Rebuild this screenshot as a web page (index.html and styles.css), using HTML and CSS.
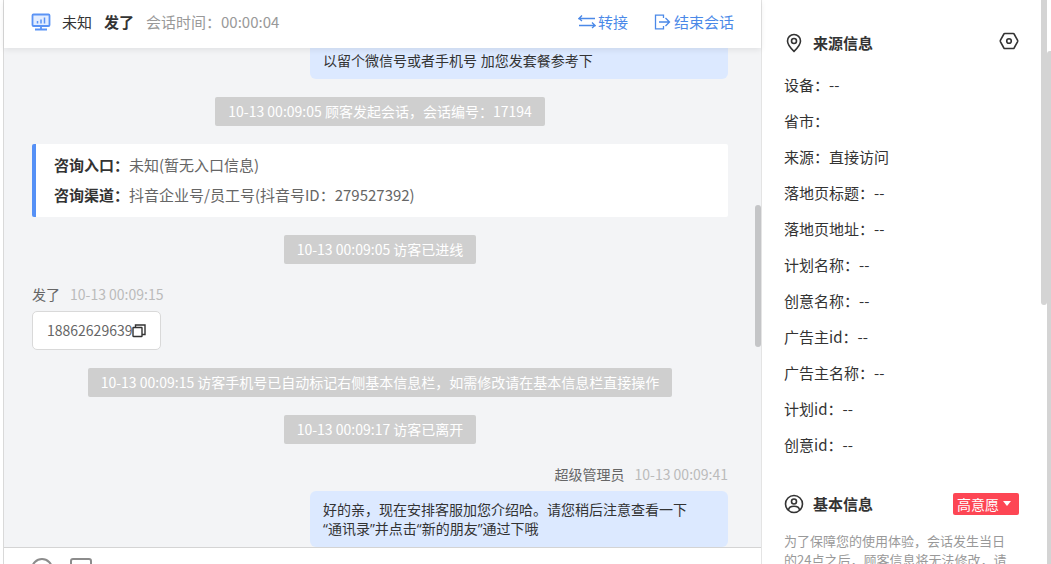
FILE: index.html
```
<!DOCTYPE html>
<html lang="zh-CN">

<head>
    <meta charset="UTF-8">
    <meta name="viewport" content="width=device-width, initial-scale=1.0">
    <title>在线会话</title>
    <link rel="stylesheet" href="styles.css">
</head>

<body>

    <div class="wrapper">
        <div class="rail"></div>

        <main class="chat">
            <header class="chat-header">
                <svg class="icon-monitor" width="20" height="18" viewBox="0 0 20 18" fill="none" stroke="#5b93f5" stroke-width="1.800">
                    <rect x="1.500" y="1.500" width="17" height="11.500" rx="1" fill="#e3edff" />
                    <path d="M6.500 10.500V8M10 10.500V6.500M13.500 10.500V4.500" stroke-width="1.500" />
                    <path d="M10 13v3M4 16.500h12" />
                </svg>
                <span class="from">未知</span>
                <strong class="name">发了</strong>
                <span class="duration">会话时间：00:00:04</span>
                <div class="actions">
                    <button type="button">
                        <svg width="18" height="16" viewBox="0 0 18 16" fill="none" stroke="currentColor" stroke-width="1.300">
                            <path d="M4 1.500L1 4.500h16M4 7L1 4.500M14 8.500L17 11.500H1M14 14L17 11.500" />
                        </svg>
                        <span>转接</span>
                    </button>
                    <button type="button">
                        <svg width="18" height="16" viewBox="0 0 18 16" fill="none" stroke="currentColor" stroke-width="1.300">
                            <path d="M9.500 4V1.200H1.500v13.600h8V12M5 8h10.500M11.500 4l4 4-4 4" />
                        </svg>
                        <span>结束会话</span>
                    </button>
                </div>
            </header>

            <section class="messages">
                <div class="bubble bubble-first">以留个微信号或者手机号 加您发套餐参考下</div>
                <p class="notice">10-13 00:09:05 顾客发起会话，会话编号：17194</p>
                <div class="entry">
                    <p><strong>咨询入口：</strong>未知(暂无入口信息)</p>
                    <p><strong>咨询渠道：</strong>抖音企业号/员工号(抖音号ID：279527392)</p>
                </div>
                <p class="notice">10-13 00:09:05 访客已进线</p>
                <div class="message">
                    <div class="meta"><span>发了</span><time>10-13 00:09:15</time></div>
                    <div class="phone">
                        <span>18862629639</span>
                        <button type="button" aria-label="复制">
                            <svg width="14" height="14" viewBox="0 0 14 14" fill="none" stroke="#333" stroke-width="1.400">
                                <rect x="1" y="3.500" width="9" height="9" rx=".5" />
                                <path d="M3.500 3.500V1h9.500v9.500h-3" />
                            </svg>
                        </button>
                    </div>
                </div>
                <p class="notice">10-13 00:09:15 访客手机号已自动标记右侧基本信息栏，如需修改请在基本信息栏直接操作</p>
                <p class="notice">10-13 00:09:17 访客已离开</p>
                <div class="message message-self">
                    <div class="meta"><span>超级管理员</span><time>10-13 00:09:41</time></div>
                    <div class="bubble">好的亲，现在安排客服加您介绍哈。请您稍后注意查看一下<br>“通讯录”并点击“新的朋友”通过下哦</div>
                </div>
            </section>

            <footer class="composer">
                <button type="button" aria-label="表情">
                    <svg width="22" height="22" viewBox="0 0 22 22" fill="none" stroke="#8c8c8c" stroke-width="2">
                        <circle cx="11" cy="11" r="10" />
                        <path d="M6.500 13c2 3.500 7 3.500 9 0M7.500 8v1M14.500 8v1" />
                    </svg>
                </button>
                <button type="button" aria-label="图片">
                    <svg width="22" height="22" viewBox="0 0 22 22" fill="none" stroke="#8c8c8c" stroke-width="2">
                        <rect x="1" y="1" width="20" height="20" rx="2" />
                        <path d="M2 17l6-6 5 5 3-3 5 5" />
                    </svg>
                </button>
            </footer>
            <i class="scroll-thumb"></i>
        </main>

        <aside class="info">
            <div class="info-title">
                <svg width="20" height="20" viewBox="0 0 20 20" fill="none" stroke="#333" stroke-width="1.600">
                    <path d="M10 1.500a6.500 6.500 0 0 0-6.500 6.500c0 4 3.500 7.500 6.500 10.300 3-2.800 6.500-6.300 6.500-10.300A6.500 6.500 0 0 0 10 1.500z" />
                    <circle cx="10" cy="8" r="2.500" />
                </svg>
                <h2>来源信息</h2>
                <button type="button" class="setting" aria-label="设置">
                    <svg width="20" height="18" viewBox="0 0 20 18" fill="none" stroke="#333" stroke-width="1.600">
                        <path d="M5.800 1.500h8.400q.6 0 .9.500L18.500 8.200q.4.800 0 1.600L15.100 16q-.3.500-.9.500H5.800q-.6 0-.9-.5L1.500 9.800q-.4-.8 0-1.600L4.900 2q.3-.5.9-.5z" />
                        <circle cx="10" cy="9" r="2.300" />
                    </svg>
                </button>
            </div>
            <ul class="info-list">
                <li>设备：--</li>
                <li>省市：</li>
                <li>来源：直接访问</li>
                <li>落地页标题：--</li>
                <li>落地页地址：--</li>
                <li>计划名称：--</li>
                <li>创意名称：--</li>
                <li>广告主id：--</li>
                <li>广告主名称：--</li>
                <li>计划id：--</li>
                <li>创意id：--</li>
            </ul>
            <div class="info-title">
                <svg width="20" height="20" viewBox="0 0 20 20" fill="none" stroke="#333" stroke-width="1.600">
                    <circle cx="10" cy="10" r="8.500" />
                    <circle cx="10" cy="7.500" r="2.500" />
                    <path d="M4.500 16c.5-5 10.500-5 11 0" />
                </svg>
                <h2>基本信息</h2>
                <label class="level">
                    <select aria-label="意愿等级">
                        <option>高意愿</option>
                    </select>
                </label>
            </div>
            <p class="tips">为了保障您的使用体验，会话发生当日的24点之后，顾客信息将无法修改，请</p>
        </aside>
        <i class="page-thumb"></i>
        <i class="window-thumb"></i>
    </div>

</body>

</html>
```
FILE: styles.css
```
* {
    box-sizing: border-box;
}

body,
p,
h2,
ul {
    margin: 0;
    padding: 0;
}

body {
    color: #333;
    font: 15px/20px "Noto Sans CJK SC", sans-serif;
}

ul {
    list-style: none;
}

svg {
    display: block;
}

button {
    padding: 0;
    border: 0;
    background: none;
    color: inherit;
    font: inherit;
    cursor: pointer;
}

.wrapper {
    position: relative;
    display: flex;
    height: 100vh;
    overflow: hidden;
}

.rail {
    flex: none;
    width: 4px;
    border-right: 1px solid #d9d9d9;
}

/* 会话区 */
.chat {
    position: relative;
    flex: 1;
    background: #f3f4f6;
}

.chat-header {
    position: relative;
    display: flex;
    align-items: center;
    height: 48px;
    padding: 0 27px 4px;
    background: #fff;
    box-shadow: 0 2px 6px rgba(0, 0, 0, .08);
}

.from {
    margin-left: 11px;
}

.name {
    margin-left: 12px;
}

.duration {
    margin-left: 12px;
    color: #999;
}

.actions {
    display: flex;
    gap: 26px;
    margin-left: auto;
    color: #4b89e8;
}

.actions button {
    display: flex;
    align-items: center;
    gap: 2px;
}

.messages {
    display: flex;
    flex-direction: column;
    gap: 18px;
    padding: 0 33px 0 28px;
    font-size: 14px;
}

.bubble {
    align-self: flex-end;
    width: 418px;
    padding: 9px 13px;
    border-radius: 6px;
    background: #dce9ff;
    font-family: "Open Sans", "Noto Sans CJK SC", sans-serif;
    line-height: 19px;
}

.bubble-first {
    padding-top: 3px;
    border-radius: 0 0 6px 6px;
}

.notice {
    align-self: center;
    padding: 4px 13px 5px;
    border-radius: 2px;
    background: #cfcfcf;
    color: #fff;
}

.entry {
    padding: 6px 18px 7px;
    border-left: 4px solid #5590f6;
    border-radius: 2px;
    background: #fff;
    color: #666;
    font-size: 15px;
    line-height: 30px;
}

.entry strong {
    color: #333;
}

.message {
    display: flex;
    flex-direction: column;
    align-items: flex-start;
}

.message-self {
    align-items: flex-end;
}

.meta {
    display: flex;
    gap: 10px;
    padding-bottom: 5px;
    color: #666;
    line-height: 24px;
}

.meta time {
    color: #bbb;
}

.phone {
    display: flex;
    align-items: center;
    padding: 9px 14px;
    border: 1px solid #d9d9d9;
    border-radius: 5px;
    background: #fff;
    color: #666;
    line-height: 19px;
}

.composer {
    display: flex;
    gap: 17px;
    padding: 10px 27px;
    border-top: 1px solid #d4d4d4;
    background: #fff;
}

/* 滚动条 */
.scroll-thumb,
.page-thumb,
.window-thumb {
    position: absolute;
    background: #d4d4d4;
}

.scroll-thumb {
    top: 205px;
    right: 0;
    width: 6px;
    height: 142px;
    border-radius: 3px;
    background: #c4c5c7;
}

.page-thumb {
    top: 0;
    right: 4px;
    width: 6px;
    height: 305px;
    border-radius: 0 0 3px 3px;
}

.window-thumb {
    top: 51px;
    right: 0;
    bottom: 0;
    width: 4px;
    border-radius: 3px 0 0 0;
}

/* 右侧信息栏 */
.info {
    flex: none;
    width: 290px;
    padding: 32px 32px 0 22px;
    border-left: 1px solid #e4e4e4;
    background: #fff;
}

.info-title {
    display: flex;
    align-items: center;
    height: 22px;
}

.info-title h2 {
    margin-left: 9px;
    font-size: 15px;
}

.setting {
    align-self: flex-start;
    margin-left: auto;
}

.info-list {
    padding: 13px 0 30px;
    line-height: 36px;
}

.level {
    position: relative;
    margin-left: auto;
}

.level::after {
    content: "";
    position: absolute;
    top: 8px;
    right: 8px;
    border: 4px solid transparent;
    border-top: 5px solid #fff;
    border-bottom: 0;
    pointer-events: none;
}

.level select {
    display: block;
    width: 66px;
    height: 22px;
    padding: 0 0 0 4px;
    border: 0;
    border-radius: 2px;
    appearance: none;
    background: #fd4654;
    color: #fff;
    font: inherit;
    font-size: 14px;
}

.tips {
    padding: 16px 8px 0 0;
    color: #999;
    font-size: 13px;
    line-height: 19px;
}
```
